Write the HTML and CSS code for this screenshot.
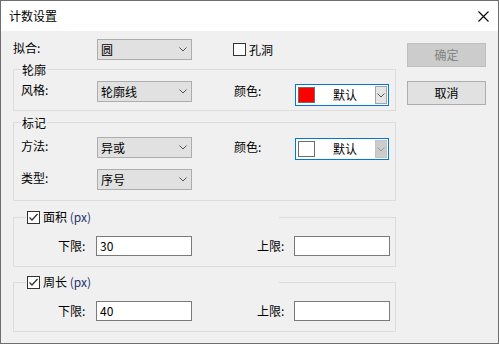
FILE: index.html
```html
<!DOCTYPE html>
<html lang="zh-CN">
<head>
<meta charset="utf-8">
<title>计数设置</title>
<link rel="stylesheet" href="styles.css">
</head>
<body>
<div class="window">
  <div class="titlebar">
    <span class="title">计数设置</span>
    <svg class="close" width="11" height="11" viewBox="0 0 11 11"><path d="M0.5 0.5L10.5 10.5M10.5 0.5L0.5 10.5" stroke="#000" stroke-width="1.1" fill="none"/></svg>
  </div>
  <div class="content">
    <div class="left">
      <div class="row row-fit">
        <span class="label label-top">拟合:</span>
        <div class="combo"><span class="combo-text">圆</span><svg class="chev" width="8" height="5" viewBox="0 0 8 5"><path d="M0.5 0.5L4 4L7.5 0.5" stroke="#555" fill="none"/></svg></div>
        <span class="check hole"><span class="box"></span><span>孔洞</span></span>
      </div>

      <fieldset class="group g-outline">
        <legend class="legend">轮廓</legend>
        <div class="row">
          <span class="label label-in">风格:</span>
          <div class="combo"><span class="combo-text">轮廓线</span><svg class="chev" width="8" height="5" viewBox="0 0 8 5"><path d="M0.5 0.5L4 4L7.5 0.5" stroke="#555" fill="none"/></svg></div>
          <span class="label2">颜色:</span>
          <div class="color-combo cc-1">
            <span class="swatch swatch-red"></span>
            <span class="cc-text">默认</span>
            <span class="cc-btn"><svg width="8" height="5" viewBox="0 0 8 5"><path d="M0.5 0.5L4 4L7.5 0.5" stroke="#555" fill="none"/></svg></span>
          </div>
        </div>
      </fieldset>

      <fieldset class="group g-mark">
        <legend class="legend">标记</legend>
        <div class="row">
          <span class="label label-in">方法:</span>
          <div class="combo"><span class="combo-text">异或</span><svg class="chev" width="8" height="5" viewBox="0 0 8 5"><path d="M0.5 0.5L4 4L7.5 0.5" stroke="#555" fill="none"/></svg></div>
          <span class="label2">颜色:</span>
          <div class="color-combo cc-2">
            <span class="swatch swatch-white"></span>
            <span class="cc-text">默认</span>
            <span class="cc-btn cc-btn-off"><svg width="8" height="5" viewBox="0 0 8 5"><path d="M0.5 0.5L4 4L7.5 0.5" stroke="#9a9a9a" fill="none"/></svg></span>
          </div>
        </div>
        <div class="row row-type">
          <span class="label label-in">类型:</span>
          <div class="combo"><span class="combo-text">序号</span><svg class="chev" width="8" height="5" viewBox="0 0 8 5"><path d="M0.5 0.5L4 4L7.5 0.5" stroke="#555" fill="none"/></svg></div>
        </div>
      </fieldset>

      <fieldset class="group g-range g-area">
        <legend class="legend legend-check">
          <span class="check"><span class="box checked"><svg width="11" height="11" viewBox="0 0 11 11"><path d="M1.5 5.5L4 8L9.5 2" stroke="#333" stroke-width="1.3" fill="none"/></svg></span><span>面积 <span class="unit">(px)</span></span></span>
        </legend>
        <div class="row range-row">
          <span class="rlabel">下限:</span>
          <div class="input">30</div>
          <span class="rlabel rlabel-2">上限:</span>
          <div class="input input-2"></div>
        </div>
      </fieldset>

      <fieldset class="group g-range g-perim">
        <legend class="legend legend-check">
          <span class="check"><span class="box checked"><svg width="11" height="11" viewBox="0 0 11 11"><path d="M1.5 5.5L4 8L9.5 2" stroke="#333" stroke-width="1.3" fill="none"/></svg></span><span>周长 <span class="unit">(px)</span></span></span>
        </legend>
        <div class="row range-row">
          <span class="rlabel">下限:</span>
          <div class="input">40</div>
          <span class="rlabel rlabel-2">上限:</span>
          <div class="input input-2"></div>
        </div>
      </fieldset>
    </div>

    <div class="right">
      <div class="btn btn-disabled">确定</div>
      <div class="btn">取消</div>
    </div>
  </div>
</div>
</body>
</html>
```

FILE: styles.css
```css
* { box-sizing: border-box; }
html, body { margin: 0; padding: 0; }
body {
  width: 499px;
  height: 344px;
  font-family: "Noto Sans CJK SC", "Microsoft YaHei", sans-serif;
  font-size: 12px;
  color: #000;
  background: #f0f0f0;
  overflow: hidden;
}
.window {
  width: 499px;
  height: 344px;
  border: 1px solid #6e6e6e;
  display: flex;
  flex-direction: column;
  background: #f0f0f0;
}
.titlebar {
  flex: none;
  height: 30px;
  background: #fff;
  display: flex;
  align-items: center;
  justify-content: space-between;
  padding: 0 9px 0 8px;
}
.title { line-height: 16px; }
.close { display: block; }

.content {
  flex: 1;
  display: flex;
  padding-left: 12px;
}
.left {
  width: 383px;
  display: flex;
  flex-direction: column;
}
.right {
  margin-left: 11px;
  width: 79px;
  padding-top: 12px;
  display: flex;
  flex-direction: column;
  gap: 14px;
}
.btn {
  height: 24px;
  border: 1px solid #adadad;
  background: #e1e1e1;
  display: flex;
  align-items: center;
  justify-content: center;
  line-height: 16px;
}
.btn-disabled {
  background: #cccccc;
  border-color: #bfbfbf;
  color: #838383;
}

.row { display: flex; align-items: flex-start; }
.row-fit { margin-top: 8px; align-items: center; }
.label {
  width: 84px;
  height: 21px;
  line-height: 18px;
  white-space: nowrap;
}
.label-in { width: 76px; }
.label2 {
  margin-left: 42px;
  width: 61px;
  height: 21px;
  line-height: 20px;
}

.combo {
  width: 95px;
  height: 21px;
  border: 1px solid #adadad;
  background: #e1e1e1;
  display: flex;
  align-items: center;
  justify-content: space-between;
  padding: 0 4px 0 3px;
}
.combo-text { line-height: 18px; padding-top: 1px; }
.chev { display: block; }

.check {
  display: flex;
  align-items: center;
  gap: 3px;
  line-height: 16px;
}
.hole { margin-left: 41px; }
.box {
  width: 13px;
  height: 13px;
  border: 1px solid #333;
  background: #fff;
  display: flex;
  align-items: center;
  justify-content: center;
  flex: none;
}
.box svg { display: block; }
.unit { color: #26306a; }

.group {
  margin: 0;
  padding: 0 0 0 7px;
  border: 1px solid #dcdcdc;
  min-width: 0;
}
.legend {
  padding: 0 1px;
  margin: 0;
  height: 17px;
  line-height: 17px;
}
.g-outline { margin-top: 1px; padding-top: 3px; padding-bottom: 4px; }
.g-mark { margin-top: 3px; padding-top: 6px; padding-bottom: 10px; }
.row-type { margin-top: 9px; }

.color-combo {
  margin-top: 3px;
  width: 94px;
  height: 22px;
  border: 1px solid #0078d7;
  background: #fff;
  padding: 1px;
  display: flex;
  align-items: center;
}
.cc-2 { margin-top: 1px; }
.swatch {
  width: 17px;
  height: 16px;
  margin-left: 1px;
  border: 1px solid #6d6d6d;
  flex: none;
}
.swatch-red { background: #ff0000; }
.swatch-white { background: #fff; }
.cc-text {
  flex: 1;
  text-align: center;
  line-height: 16px;
}
.cc-btn {
  width: 12px;
  height: 18px;
  border: 1px solid #a5a5a5;
  background: #e5e5e5;
  display: flex;
  align-items: center;
  justify-content: center;
  flex: none;
}
.cc-btn svg { display: block; }
.cc-btn-off { background: #cccccc; border-color: #c4c4c4; }

.g-range { padding-top: 10px; padding-bottom: 10px; }
.g-area { margin-top: 8px; }
.g-perim { margin-top: 7px; }
.legend-check {
  margin-left: 5px;
  width: 253px;
  background: #f0f0f0;
}
.range-row { padding-left: 37px; }
.rlabel {
  width: 38px;
  height: 20px;
  line-height: 19px;
}
.rlabel-2 { margin-left: 65px; width: 37px; }
.input {
  width: 96px;
  height: 20px;
  border: 1px solid #7a7a7a;
  background: #fff;
  padding-left: 3px;
  line-height: 18px;
}
```
